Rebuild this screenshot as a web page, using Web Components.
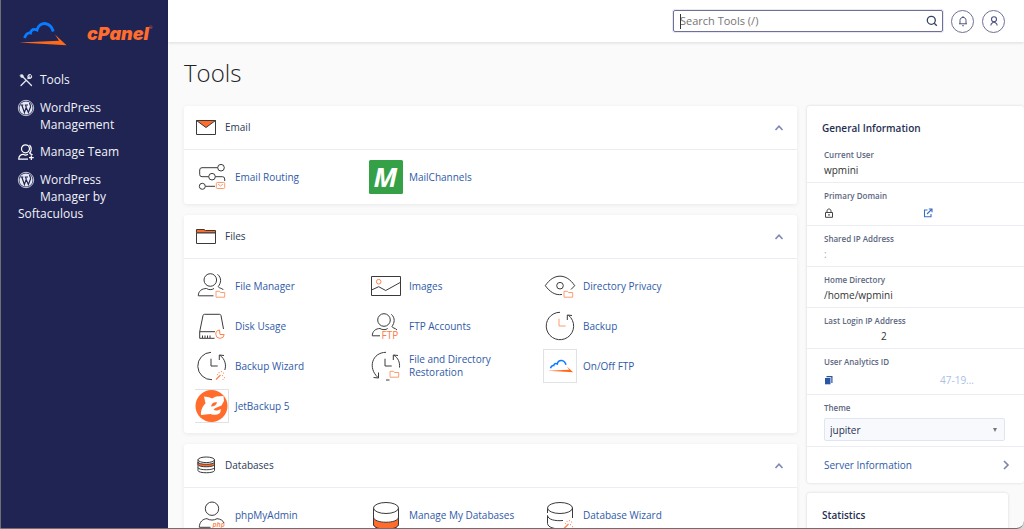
<!DOCTYPE html>
<html lang="en">
<head>
<meta charset="utf-8">
<meta name="viewport" content="width=device-width, initial-scale=1">
<title>cPanel - Tools</title>
<style>
  :root {
    --navy: #1f2453;
    --link: #2f5aa8;
    --ink: #2a3a55;
    --orange: #ff6c2c;
    --line: #ebedf3;
    --outline: #3a3a3a;
  }
  html, body { margin: 0; height: 100%; }
  body { overflow: hidden; background: #d5d5d5; font: 10px/13px "Open Sans", "Noto Sans", sans-serif; color: #333; }
</style>
</head>
<body>
<app-shell>
  <side-nav slot="nav">
    <nav-item icon="tools">Tools</nav-item>
    <nav-item icon="wordpress">WordPress Management</nav-item>
    <nav-item icon="team">Manage Team</nav-item>
    <nav-item icon="wordpress">WordPress Manager by Softaculous</nav-item>
  </side-nav>
  <top-bar slot="header"></top-bar>

  <tool-group icon="email" heading="Email">
    <tool-item icon="routing">Email Routing</tool-item>
    <tool-item icon="mailchannels">MailChannels</tool-item>
  </tool-group>
  <tool-group icon="files" heading="Files">
    <tool-item icon="filemanager">File Manager</tool-item>
    <tool-item icon="images">Images</tool-item>
    <tool-item icon="privacy">Directory Privacy</tool-item>
    <tool-item icon="disk">Disk Usage</tool-item>
    <tool-item icon="ftp">FTP Accounts</tool-item>
    <tool-item icon="backup">Backup</tool-item>
    <tool-item icon="backupwizard">Backup Wizard</tool-item>
    <tool-item icon="restoration">File and Directory Restoration</tool-item>
    <tool-item icon="onoff">On/Off FTP</tool-item>
    <tool-item icon="jetbackup">JetBackup 5</tool-item>
  </tool-group>
  <tool-group icon="databases" heading="Databases">
    <tool-item icon="phpmyadmin">phpMyAdmin</tool-item>
    <tool-item icon="managedb">Manage My Databases</tool-item>
    <tool-item icon="dbwizard">Database Wizard</tool-item>
  </tool-group>

  <info-card slot="aside" heading="General Information">
    <info-row label="Current User">wpmini</info-row>
    <info-row label="Primary Domain"><domain-value></domain-value></info-row>
    <info-row label="Shared IP Address"><faded-value>:</faded-value></info-row>
    <info-row label="Home Directory">/home/wpmini</info-row>
    <info-row label="Last Login IP Address"><masked-value>2</masked-value></info-row>
    <info-row label="User Analytics ID"><analytics-value>47-19...</analytics-value></info-row>
    <theme-picker></theme-picker>
    <more-link>Server Information</more-link>
  </info-card>
  <info-card slot="aside" heading="Statistics" inset></info-card>
</app-shell>

<script>
const CLOUD = `
  <path d="M5.500 20C7 16 9 14.500 11.500 15C12 11.500 15 10.500 18 12C19 7.500 23 5.300 26 5.500C30 6 33 9 34.300 13.500" fill="none" stroke="#0a7cff" stroke-width="2.800"/>
  <path d="M0 24.600L40 22.800L36 16.500L47.500 27.200Z" fill="#ff6a1a"/>`;
const FOLDER = `<path d="M21 27.700V22.300H24.500L25.500 23.500H29.700V28.200H21Z" stroke="#ff9a70"/>`;
const WAND = `<path d="M21 30.500L25.500 26" stroke="#ff8350" stroke-width="1.300"/><path d="M24 23v1.200M26.500 22v1.200M28.500 23.500v1.200M27.500 26v1.200M29.500 28v1.200M22.500 25v1M28 30v1" stroke="#ff9a70"/>`;
const PERSON = `<circle cx="15.300" cy="11" r="6.300"/><path d="M22.500 5.300C27 9 26 14 23.300 17.500C23 19 27 19 28.500 21M18.500 26.800H3.300C3.300 22 7 19.500 11.500 19.500C13.500 21 17 21 19 19.500"/>`;

const ICONS = {
  logo: ['0 0 48 32', CLOUD],
  tools: ['0 0 16 16', `<g stroke="#e8e9f2" fill="none" stroke-width="1.300" stroke-linecap="round"><path d="M3 13.500L8 8.500M10 6.500L11.500 5M4.500 4.500L13.500 13.500"/><path d="M2.300 3L4.300 2.500L5.500 4L4.800 5.500L3.200 5.300Z" fill="#e8e9f2" stroke-width=".6"/><path d="M10.300 6C9.300 4.300 10.600 2.600 12.300 2.700M10.300 6C12 7 13.800 5.600 13.500 4"/></g>`],
  wordpress: ['0 0 16 16', `<circle cx="8" cy="8" r="7.700" fill="none" stroke="#e8e9f2" stroke-width=".8"/><circle cx="8" cy="8" r="6.600" fill="#e8e9f2"/><path d="M2.300 5H5.300M6.800 5H10M3.800 5L6.400 12.500L8.200 7.500L10.400 12.500L12.500 7C13 5.500 11.500 4.500 11.600 3M8.200 7.500L7.700 5.200" fill="none" stroke="#1f2453" stroke-width="1.200"/>`],
  team: ['0 0 16 16', `<g stroke="#fff" fill="none" stroke-width="1.200"><circle cx="7.500" cy="4.800" r="4"/><path d="M11.500 1C14 3.500 13.500 7 11.700 9C12 10 13.500 10 14.500 11M10 15.200H.7C.7 12 3 10.300 5.200 10.300C6.500 11.200 8.500 11.200 10 10.300M13.300 11.500V16M11 13.700H15.700"/></g>`],
  search: ['0 0 12 12', `<circle cx="5.300" cy="5.300" r="4" fill="none" stroke="#33415f" stroke-width="1.300"/><path d="M8.300 8.300L10.800 10.800" stroke="#33415f" stroke-width="1.300"/>`],
  bell: ['0 0 12 12', `<path d="M2 8.800H10M3 8.800V5.500C3 1.300 9 1.300 9 5.500V8.800M5 10.300C5.500 11 6.500 11 7 10.300M6 1.200V2.300" fill="none" stroke="#4b5080"/>`],
  user: ['0 0 12 12', `<circle cx="6" cy="4.300" r="2.500" fill="none" stroke="#4b5080" stroke-width="1.100"/><path d="M2.800 10.500C2.800 8.800 4 8 5 7.500M9.200 10.500C9.200 8.800 8 8 7 7.500M4.800 7L7 7.500" fill="none" stroke="#4b5080" stroke-width="1.100"/>`],
  up: ['0 0 10 10', `<path d="M1.500 7L5 3.200L8.500 7" fill="none" stroke="#7f88b5" stroke-width="1.600"/>`],
  right: ['0 0 10 10', `<path d="M3 1L7 5L3 9" fill="none" stroke="#7b83ab" stroke-width="1.600"/>`],
  lock: ['0 0 10 10', `<path d="M1.500 4.500H8.500V9.300H1.500ZM3 4.500V3C3 .3 7 .3 7 3V4.500" fill="none" stroke="#444"/><circle cx="5" cy="6.900" r=".8" fill="#444"/>`],
  external: ['0 0 10 10', `<path d="M4.500 2H1.500V8.700H8V6M4 6L8.500 1.500M5.800 1H9V4.200" fill="none" stroke="#3d6cc0" stroke-width="1.100"/>`],
  copy: ['0 0 10 10', `<path d="M1 3H6.500V9.300H1Z" fill="#2b56a5"/><path d="M2.500 1.700H7.900V8" fill="none" stroke="#2b56a5" stroke-width="1.200"/>`],

  email: ['0 0 20 20', `<path d="M.5 3.500H19.500V17.500H.5Z" fill="#fff"/><path d="M.5 3.500H19.500L10 10.500Z" fill="var(--orange)"/>`],
  files: ['0 0 20 20', `<path d="M.5 6.500V3.500H8L9.500 4.500H19.500V7H.5Z" fill="var(--orange)"/><path d="M.5 7H19.500V17.500H.5Z" fill="#fff"/>`],
  databases: ['0 0 20 20', `<path d="M2 4.500V15.500C2 18.500 18.500 18.500 18.500 15.500V4.500" fill="#fff"/><path d="M2 7V9.500C2 12.500 18.500 12.500 18.500 9.500V7C18.500 10 2 10 2 7Z" fill="var(--orange)"/><path d="M2 12.500C2 15.500 18.500 15.500 18.500 12.500"/><ellipse cx="10.250" cy="4.800" rx="8.200" ry="2.800" fill="#fff"/>`],

  routing: ['0 0 34 34', `<circle cx="26" cy="7.700" r="3.300"/><path d="M22.700 7.700H7Q4.700 7.700 4.700 10V14.500Q4.700 16.700 7 16.700H13.700M20.300 16.700H27.500Q29.700 16.700 29.700 19V21M10.300 26.300H20"/><circle cx="17" cy="16.700" r="3.300"/><circle cx="7.300" cy="26.300" r="3"/><g stroke="#ff9a70"><rect x="21.300" y="22.500" width="8.400" height="6" rx="1"/><path d="M23 24L25.500 26L28 24"/></g>`],
  mailchannels: ['0 0 34 34', `<rect width="34" height="34" rx="1.500" fill="#35a045" stroke="none"/><text x="16.500" y="27" text-anchor="middle" font-family="Open Sans" font-size="27" font-weight="700" font-style="italic" fill="#fff" stroke="none">M</text>`],
  filemanager: ['0 0 34 34', PERSON + FOLDER],
  images: ['0 0 34 34', `<path d="M2.500 7.500H31.500V26.500H2.500ZM2.500 21L9.700 17.700L16.700 21.500L31.500 13.300"/><circle cx="9.700" cy="12.700" r="2.300" stroke="#ff8350"/>`],
  privacy: ['0 0 34 34', `<path d="M19 25.500C12 26.500 7 23 2.300 16.700C10.500 4 23.500 4 31.700 16.700L28 20.500"/><circle cx="17" cy="16.700" r="3.300"/>` + FOLDER],
  disk: ['0 0 34 34', `<path d="M20 22.700H4.700V29.300H19.500M4.700 22.700L8 6.500Q8.300 5.300 9.500 5.300H24.500Q25.700 5.300 26 6.500L28.500 20M7.500 29V26.500M10 29V26.500M12.500 29V26.500M15 29V26.500"/><path d="M24.500 21A4.200 4.200 0 1 0 29.200 25.500H25Z" stroke="#ff8350"/>`],
  ftp: ['0 0 34 34', `<g><circle cx="15" cy="11" r="6.300"/><path d="M22.300 5.300C26.500 9 25.500 14 23 17.500C23 19 26.500 19 28 21M11 26.800H3.300C3.300 22 7 19.500 11 19.500C13 21 17 21 18.700 19.500"/></g><text x="12.500" y="29.500" font-family="Open Sans" font-size="10" fill="#ff7a45" stroke="none">FTP</text>`],
  backup: ['0 0 34 34', `<path d="M17 3.300A13.700 13.700 0 1 0 25.500 6.300M24.300 11V6L29 6.500"/><path d="M16 9.700V17H22.700" stroke="#ff9a70"/>`],
  backupwizard: ['0 0 34 34', `<path d="M16 3.300A13.700 13.700 0 1 0 17 30.700M25 6.300C30 10 31.500 16 29.800 21M24.300 11V6L29 6.500M16 9.700V17H22.700"/>` + WAND],
  restoration: ['0 0 34 34', `<path d="M17 3.300C3 3.500-1.500 19 9 28.500M4.500 28.500L9.500 29V23.500M17 31H20.500M25 6.300C29 9 31 13 30.500 18.500M24.300 11V6L29 6.500M16 9.700V17H22.700"/>` + FOLDER],
  onoff: ['0 0 34 34', `<rect x=".5" y=".5" width="33" height="33" fill="#fff" stroke="#dfe1e5"/><g stroke="none" transform="translate(4.500 8.500) scale(.54)">${CLOUD}</g>`],
  jetbackup: ['0 0 34 34', `<path d="M0 .5H33.500V33.500H0" stroke="#dfe1e5"/><circle cx="16.500" cy="17" r="16" fill="#ff6c2c" stroke="none"/><path d="M9 7.500L14 8.300L17 9.500L21 7.500L28.500 7L29 12L26.500 16.500L20 19.300L18.500 20.800C21 22.500 24 21 26 20L25 24C22 26.500 17 26 15.500 25L6 26C5.500 22 7.500 17 10.500 14.500Z" fill="#fff" stroke="none"/><path d="M16 17.500C16.500 14 19.500 12.500 22 13.500C21.500 16 19 17.500 16 17.500Z" fill="#ff6c2c" stroke="none"/>`],
  phpmyadmin: ['0 0 34 34', `<circle cx="17" cy="10.700" r="6.700"/><path d="M15.500 29.300H4.300C4.300 24 8 20.700 12 20.700C15 22.500 19 22.500 22 20.700C25.500 21 28 22.500 29 25"/><text x="17.500" y="28.500" font-family="Open Sans" font-size="7" font-weight="600" font-style="italic" fill="#ff7a45" stroke="none">php</text>`],
  managedb: ['0 0 34 34', `<path d="M4.500 10V26C4.500 33 29.500 33 29.500 26V10" fill="#fff"/><path d="M4.500 19V26C4.500 33 29.500 33 29.500 26V19C29.500 26 4.500 26 4.500 19Z" fill="var(--orange)"/><ellipse cx="17" cy="10" rx="12.500" ry="5.500" fill="#fff"/>`],
  dbwizard: ['0 0 34 34', `<ellipse cx="17" cy="10" rx="12.500" ry="5.500"/><path d="M4.500 10.500V15M29.500 10V20M4.500 17.500C5 21.500 12 23.300 20 22.500M4.500 17.500V25.500C5 29.500 11 31 19 31"/>` + WAND]
};

function define(name, css, html, setup) {
  customElements.define(name, class extends HTMLElement {
    connectedCallback() {
      if (this.shadowRoot) return;
      const root = this.attachShadow({ mode: 'open' });
      const t = document.createElement('template');
      t.innerHTML = `<style>*{box-sizing:border-box}:host{display:block}${css}</style>` +
        (typeof html === 'function' ? html(this) : html);
      root.append(t.content.cloneNode(true));
      if (setup) setup(this, root);
    }
  });
}

define('ui-icon', `
  :host { display: block; flex: none; width: var(--icon-w, 10px); height: var(--icon-h, var(--icon-w, 10px)); }
  svg { display: block; width: 100%; height: 100%; overflow: visible; }`,
  el => { const [box, art] = ICONS[el.getAttribute('name')];
    return `<svg viewBox="${box}" aria-hidden="true" fill="none" ${box.endsWith('34 34') || box === '0 0 20 20' ? 'stroke="var(--outline)"' : ''}>${art}</svg>`; });

define('app-shell', `
  :host { display: flex; height: 100vh; overflow: hidden; background: #fafafa; border-left: 1px solid #6f6f74; border-bottom: 1px solid #6f6f6f; border-bottom-right-radius: 8px; box-sizing: border-box; }
  .page { flex: 1; min-width: 0; display: flex; flex-direction: column; }
  .body { flex: 1; min-height: 0; padding: 15px 0 0 16px; }
  h1 { margin: 0 0 17px; font-size: 24px; line-height: 32px; font-weight: 300; color: #222; }
  .columns { display: flex; gap: 10px; align-items: flex-start; }
  main { flex: 1; min-width: 0; display: grid; gap: 11px; }
  aside { flex: none; width: 217px; display: grid; gap: 10px; }`, `
  <slot name="nav"></slot>
  <div class="page">
    <slot name="header"></slot>
    <div class="body">
      <h1>Tools</h1>
      <div class="columns"><main><slot></slot></main><aside><slot name="aside"></slot></aside></div>
    </div>
  </div>`);

define('side-nav', `
  :host { flex: none; width: 167px; background: var(--navy); color: #fff; }
  .brand { display: flex; align-items: center; gap: 20px; padding: 18px 12px 0 18px; height: 50px; --icon-w: 48px; --icon-h: 32px; }
  .name { display: flex; font: italic 900 18px/32px "Inter", sans-serif; color: var(--orange); }
  small { font: 4px/20px "Open Sans", sans-serif; }
  nav { display: grid; gap: 10px; padding: 21px 16px 0 17px; }`, `
  <div class="brand"><ui-icon name="logo"></ui-icon><span class="name">cPanel<small>®</small></span></div>
  <nav><slot></slot></nav>`);

define('nav-item', `
  a { display: block; color: #f1f2f8; text-decoration: none; font-size: 12px; line-height: 17px; }
  ui-icon { float: left; --icon-w: 16px; margin: 1px 6px 1px 0; }`,
  el => `<a href="#"><ui-icon name="${el.getAttribute('icon')}"></ui-icon><slot></slot></a>`);

define('top-bar', `
  :host { flex: none; background: #fff; box-shadow: 0 1px 3px #0000001f; }
  header { display: flex; justify-content: flex-end; align-items: center; gap: 8px; height: 42px; padding-right: 19px; }
  form { position: relative; flex: 0 1 270px; display: flex; align-items: center; height: 22px; border: 1px solid #6d7199; border-radius: 2px; box-shadow: 0 0 0 1px #8e91b433; padding: 0 4px 0 6px; }
  form::before { content: ""; position: absolute; left: 6px; top: 3px; width: 1px; height: 15px; background: #333; }
  input { flex: 1; min-width: 0; border: 0; outline: 0; padding: 0; background: none; font: 11px/16px "Open Sans", sans-serif; color: #333; }
  input::placeholder { color: #757575; opacity: 1; }
  button { border: 0; padding: 0; background: none; --icon-w: 12px; }
  .round { display: grid; place-items: center; width: 23px; height: 23px; border: 1px solid #6d7199; border-radius: 50%; background: #fff; }`, `
  <header>
    <form role="search"><input type="search" aria-label="Search Tools" placeholder="Search Tools (/)"><button type="button" aria-label="Search"><ui-icon name="search"></ui-icon></button></form>
    <button class="round" aria-label="Notifications"><ui-icon name="bell"></ui-icon></button>
    <button class="round" aria-label="Account"><ui-icon name="user"></ui-icon></button>
  </header>`);

define('tool-group', `
  :host { background: #fff; border-radius: 3px; box-shadow: 0 1px 4px #00000012; }
  header { display: flex; align-items: center; gap: 9px; height: 44px; padding: 0 13px 1px 12px; border-bottom: 1px solid var(--line); --icon-w: 20px; }
  h2 { flex: 1; margin: 0; font-size: 10px; line-height: 16px; font-weight: 400; color: var(--ink); }
  button { border: 0; padding: 2px 0 0; background: none; --icon-w: 10px; }
  .items { display: grid; grid-template-columns: repeat(auto-fill, 174px); grid-auto-rows: 40px; padding: 7px 0 7px 11px; }
  .items[hidden] { display: none; }`,
  el => `<header><ui-icon name="${el.getAttribute('icon')}"></ui-icon><h2>${el.getAttribute('heading')}</h2><button aria-label="Collapse" aria-expanded="true"><ui-icon name="up"></ui-icon></button></header><div class="items"><slot></slot></div>`,
  (el, root) => {
    const b = root.querySelector('button'), items = root.querySelector('.items');
    b.onclick = () => { items.hidden = !items.hidden; b.setAttribute('aria-expanded', !items.hidden); };
  });

define('tool-item', `
  a { display: flex; align-items: center; gap: 6px; height: 100%; color: var(--link); text-decoration: none; --icon-w: 34px; }
  span { padding-right: 16px; }`,
  el => `<a href="#"><ui-icon name="${el.getAttribute('icon')}"></ui-icon><span><slot></slot></span></a>`);

define('info-card', `
  :host { background: #fff; border-radius: 3px; box-shadow: 0 0 3px #00000026; }
  :host([inset]) { margin-right: 16px; padding-bottom: 40px; }
  h2 { margin: 0; padding: 14px 15px 6px; font-size: 10px; line-height: 16px; font-weight: 600; color: #1f2f52; }`,
  el => `<h2>${el.getAttribute('heading')}</h2><slot></slot>`);

define('info-row', `
  :host { padding: 5px 19px 3px 17px; border-bottom: 1px solid var(--line); }
  .label { font-size: 8px; line-height: 15px; font-weight: 600; color: #5c6780; }
  .value { line-height: 17px; color: #333; }`,
  el => `<div class="label">${el.getAttribute('label')}</div><div class="value"><slot></slot></div>`);

define('domain-value', `
  :host { display: flex; align-items: center; gap: 89px; height: 19px; }`, `
  <ui-icon name="lock"></ui-icon><a href="#" aria-label="Open site"><ui-icon name="external"></ui-icon></a>`);

define('faded-value', `:host { color: #a5a5a5; }`, `<slot></slot>`);
define('masked-value', `:host { padding-left: 57px; }`, `<slot></slot>`);

define('analytics-value', `
  :host { display: flex; align-items: center; justify-content: space-between; height: 22px; padding-right: 31px; }
  button { border: 0; padding: 0; background: none; }
  a { color: #a9bfe6; text-decoration: none; }`, `
  <button aria-label="Copy ID"><ui-icon name="copy"></ui-icon></button><a href="#"><slot></slot></a>`);

define('theme-picker', `
  :host { padding: 5px 19px 5px 17px; border-bottom: 1px solid var(--line); }
  label { display: block; margin-bottom: 3px; font-size: 8px; line-height: 15px; font-weight: 600; color: #5c6780; }
  select { appearance: none; display: block; width: 100%; height: 23px; padding: 0 5px; border: 1px solid #dfe5f2; border-radius: 2px; color: #1f2f52; font: 10px/16px "Open Sans", sans-serif;
    background: #f7f9fd url("data:image/svg+xml,%3Csvg xmlns='http://www.w3.org/2000/svg' viewBox='0 0 6 6'%3E%3Cpath d='M1 1H5L3 5Z' fill='%23777'/%3E%3C/svg%3E") no-repeat right 6px center / 6px 6px; }`, `
  <label for="theme">Theme</label><select id="theme"><option>jupiter</option></select>`);

define('more-link', `
  a { display: flex; align-items: center; justify-content: space-between; height: 36px; padding: 0 13px 0 17px; color: var(--link); text-decoration: none; }`, `
  <a href="#"><span><slot></slot></span><ui-icon name="right"></ui-icon></a>`);
</script>
</body>
</html>
